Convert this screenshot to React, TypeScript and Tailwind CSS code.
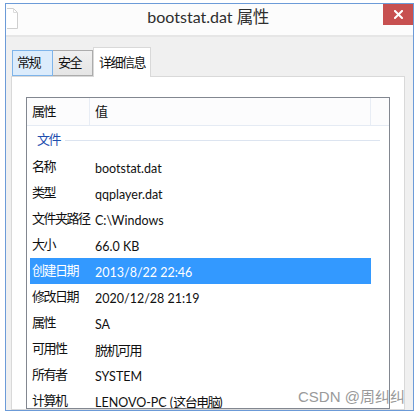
import React from 'react'

const HAN = /([\u3000-\u9fff\uff00-\uffef]+)/

// latin and han runs get their own size, like Segoe UI + YaHei in the original
function Mixed({ text, latin, han }: { text: string; latin: string; han: string }) {
  return (
    <>
      {text
        .split(HAN)
        .filter(Boolean)
        .map((part, i) => (
          <span key={i} className={HAN.test(part) ? han : latin}>
            {part}
          </span>
        ))}
    </>
  )
}

const rows = [
  { label: '名称', value: 'bootstat.dat' },
  { label: '类型', value: 'qqplayer.dat' },
  { label: '文件夹路径', value: 'C:\\Windows' },
  { label: '大小', value: '66.0 KB' },
  { label: '创建日期', value: '2013/8/22 22:46', selected: true },
  { label: '修改日期', value: '2020/12/28 21:19' },
  { label: '属性', value: 'SA' },
  { label: '可用性', value: '脱机可用' },
  { label: '所有者', value: 'SYSTEM' },
  { label: '计算机', value: 'LENOVO-PC (这台电脑)' },
]

const han = 'text-[13px] tracking-[-1.5px]'

function DocIcon() {
  return (
    <svg width="11" height="21" viewBox="0 0 11 21" className="absolute left-[1px] top-[4px]">
      <path d="M0 0.5 H6.5 L10.5 4.5 V20.5 H0" fill="#ffffff" stroke="#cfcfcf" strokeWidth="1" />
      <path d="M6.5 0.5 V4.5 H10.5" fill="none" stroke="#dcdcdc" strokeWidth="1" />
    </svg>
  )
}

export default function App() {
  return (
    <div className="relative h-[416px] w-[420px] overflow-hidden bg-white font-['Lato','Noto_Sans_CJK_SC',sans-serif] text-[#111]">
      <div className="ml-[5px] mt-[3px] flex h-[408px] w-[409px] flex-col overflow-hidden border border-[#6c9bd8] bg-[#f0f0f0]">
        {/* title bar */}
        <div className="relative flex h-[33px] flex-none justify-center border-b-2 border-[#e6e6e6] bg-[#fcfcfc] pr-[3px] pt-[2px]">
          <DocIcon />
          <span className="leading-[22px] text-[#2e2e2e]">
            <Mixed text="bootstat.dat 属性" latin="text-[16px]" han="text-[16.5px] tracking-[-0.5px]" />
          </span>
          <div className="absolute right-0 top-0 flex h-[21px] w-[30px] items-center justify-center bg-[#c75050]">
            <svg width="9" height="9" viewBox="0 0 9 9">
              <path d="M1 1 L8 8 M8 1 L1 8" stroke="#ffffff" strokeWidth="2" strokeLinecap="square" />
            </svg>
          </div>
        </div>

        {/* tabs + page */}
        <div className="ml-[5px] mr-[8px] flex min-h-0 flex-1 flex-col pt-[10px]">
          <div className="flex h-[29px] flex-none items-end pl-[1px]">
            <div className={`flex h-[26px] w-[41px] items-center border border-[#7eb4ea] bg-[#dcecfc] pl-[4px] ${han}`}>
              常规
            </div>
            <div className={`flex h-[26px] w-[40px] items-center border border-l-0 border-[#acacac] bg-gradient-to-b from-[#f0f0f0] to-[#e5e5e5] pl-[5px] ${han}`}>
              安全
            </div>
            <div className={`relative z-10 -mb-px flex h-[30px] w-[58px] items-start border border-b-0 border-[#d9d9d9] bg-white pl-[5px] pt-[5px] leading-[18px] ${han}`}>
              详细信息
            </div>
          </div>

          <div className="min-h-0 flex-1 border border-[#d9d9d9] bg-white px-[14px] pt-[20px]">
            <div className="h-full overflow-hidden border border-[#828790] bg-white">
              {/* column header */}
              <div className={`flex h-[28px] border-b border-[#e5ebf4] bg-[#fcfcfd] ${han}`}>
                <div className="flex w-[63px] items-center border-r border-[#e8edf5] pl-[5px]">属性</div>
                <div className="flex w-[281px] items-center border-r border-[#e8edf5] pl-[5px]">值</div>
              </div>

              {/* group */}
              <div className="flex h-[28px] items-center pl-[10px] pr-[9px]">
                <span className={`text-[#1f4fae] ${han}`}>文件</span>
                <div className="ml-[5px] h-px flex-1 bg-[#dce4f0]" />
              </div>

              <div className="pl-[3px]">
                {rows.map((r) => (
                  <div
                    key={r.label}
                    className={
                      r.selected
                        ? 'flex h-[26px] w-[341px] items-center whitespace-nowrap bg-[#3399ff] pl-[2px] text-white'
                        : 'flex h-[26px] w-[341px] items-center whitespace-nowrap pl-[2px]'
                    }
                  >
                    <span className={`min-w-[63px] flex-none pr-[2px] ${han}`}>{r.label}</span>
                    <span>
                      <Mixed text={r.value} latin="text-[12.5px]" han={han} />
                    </span>
                  </div>
                ))}
              </div>
            </div>
          </div>
        </div>
      </div>

      <div className="absolute left-[298px] top-[388px] whitespace-nowrap font-['Liberation_Sans','Noto_Sans_CJK_SC',sans-serif] text-[15px] leading-[18px] text-[#9a9a9a]">
        CSDN @周纠纠
      </div>
    </div>
  )
}
